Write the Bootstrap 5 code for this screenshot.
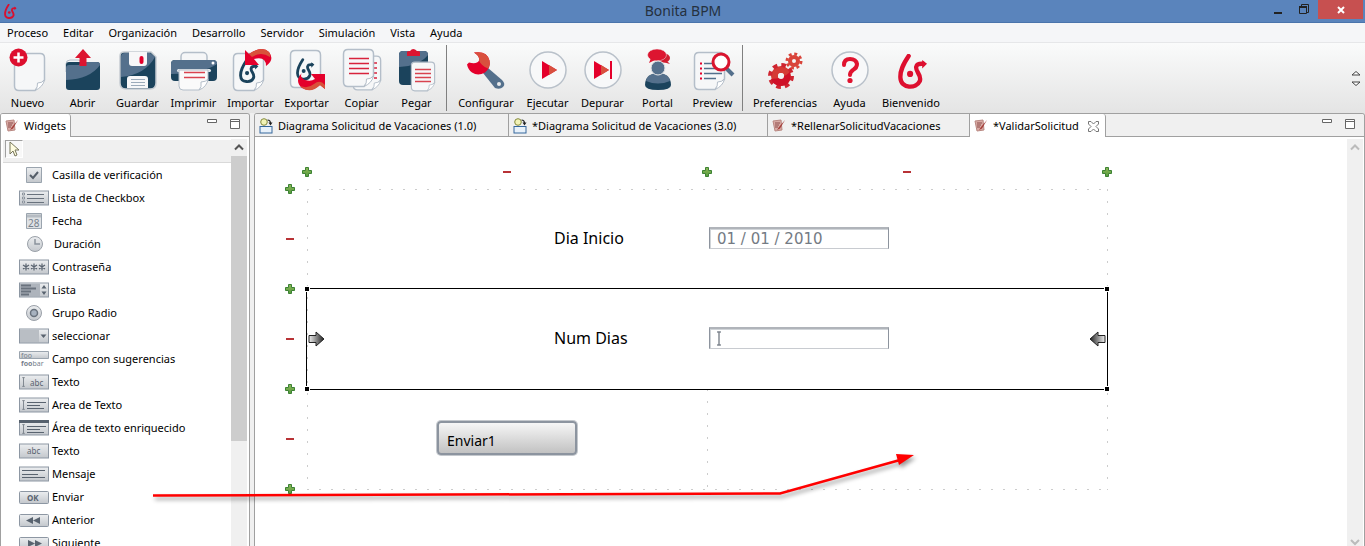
<!DOCTYPE html>
<html lang="es">
<head>
<meta charset="utf-8">
<meta name="viewport" content="width=device-width, initial-scale=1">
<title>Bonita BPM</title>
<link href="https://cdn.jsdelivr.net/npm/bootstrap@5.3.0/dist/css/bootstrap.min.css" rel="stylesheet">
<style>
  :root { --navy:#1b435c; --slate:#54708c; --red:#e4002b; --line:#a0a0a0; --pane:#f0f0f0; }
  body { font-family:"Noto Sans","Open Sans",sans-serif; font-size:11px; line-height:16px; color:#000; background:#f0f0f0; }
  button { font:inherit; color:inherit; background:none; border:0; padding:0; }
  svg { display:block; flex:none; }

  .titlebar { height:23px; background:#5a84bc; border-bottom:1px solid #4a74ac; }
  .titlebar h1 { font-size:14px; line-height:22px; color:#25313f; padding-left:84px; }
  .win-close { width:45px; height:19px; background:#c75050; margin-right:2px; }
  .win-btns { height:19px; }

  .menubar { height:20px; background:#f5f6f8; border-bottom:1px solid #e6e7e9; padding-left:7px; gap:15px; }
  .menubar a { color:#000; }

  .toolbar { height:70px; background:linear-gradient(#fafbfb,#e4e4e4); }
  .tool { width:55px; padding-top:5px; }
  .tool.w-57 { width:57px; }
  .tool.w-68 { width:68px; }
  .tool.w-74 { width:74px; }
  .tool span { display:block; line-height:22px; white-space:nowrap; }
  .tool-sep { width:1px; height:66px; background:#808080; margin:2px 5px 0 2px; }

  .pane { border:1px solid var(--line); border-bottom:0; border-radius:3px 3px 0 0; background:#fff; overflow:hidden; }
  .palette { width:250px; flex:none; }
  .tabstrip { height:23px; background:var(--pane); border-bottom:1px solid var(--line); }
  .tabitem { height:22px; border-right:1px solid var(--line); padding:2px 4px 0; gap:5px; white-space:nowrap; }
  .tabitem.on { height:23px; background:#fff; border-radius:0 3px 0 0; padding-top:1px; }
  .tab-wide { width:254px; }
  .tab-diagram { width:259px; }
  .tab-form { width:202px; }
  .tab-last { width:136px; }

  .palette-body { padding:3px 0 0 2px; }
  .palette-head { height:23px; background:var(--pane); border-bottom:1px solid #d9d9d9; padding-left:2px; }
  .pick { width:18px; height:18px; border:1px solid #a0a0a0; border-right-color:#fff; border-bottom-color:#fff; background:#f8f8f8; }
  .wlist { padding:0 0 0 16px; }
  .wlist li { height:23px; gap:3px; }
  .scroll { width:16px; background:#f0f0f0; margin:2px 1px 0 0; }
  .palette .scroll { margin-right:2px; }
  .thumb { height:285px; background:#cdcdcd; }

  .editor-body { padding:30px 0 0 30px; overflow:hidden; }
  .designer { display:grid; grid-template:10px 310px / 10px 810px; gap:7px; }
  .form-grid { position:relative; margin:5px 4px 4px 5px;
    background:
      repeating-linear-gradient(90deg,#ccc 0 2px,transparent 2px 12px) 0 0/100% 1px no-repeat,
      repeating-linear-gradient(90deg,#ccc 0 2px,transparent 2px 12px) 0 100%/100% 1px no-repeat,
      repeating-linear-gradient(#ccc 0 2px,transparent 2px 12px) 0 0/1px 100% no-repeat,
      repeating-linear-gradient(#ccc 0 2px,transparent 2px 12px) 100% 0/1px 100% no-repeat; }
  .frow { height:100px; display:grid; grid-template-columns:400px 1fr; align-items:center; padding-bottom:2px; }
  .frow label { width:153px; margin-left:auto; font-size:16px; line-height:22px; }
  .frow .split { align-self:stretch; background:repeating-linear-gradient(#ccc 0 2px,transparent 2px 12px) 0 0/1px 100% no-repeat; }
  .field { width:180px; height:22px; margin-left:2px; border:1px solid #8d949e; border-top:2px solid #b0b4ba; border-bottom-color:#c8cbd0; border-radius:0; box-shadow:inset 1px 1px 0 #d0d4d8; padding:0 7px; font:15px/18px "DejaVu Sans",sans-serif; color:#747b84; background:#fff; outline:0; }
  .selected { position:relative; }
  .selbox { position:absolute; inset:-1px 0 -1px -1px; border:1px solid #000; pointer-events:none; }
  .knob { position:absolute; width:6px; height:6px; background:#000; border:1px solid #fff; }
  .k-t { top:-3px; } .k-b { bottom:-3px; } .k-l { left:-3px; } .k-r { right:-2px; }
  .nudge { position:absolute; top:42px; }
  .n-l { left:1px; } .n-r { right:2px; }
  .caret-mark { position:absolute; left:9px; top:4px; }
  .submit { width:140px; height:34px; margin:0 auto; border:2px solid #8c949f; border-radius:4px; background:linear-gradient(#f6f6f6,#c2c2c2); box-shadow:0 0 0 1px #c4c8cd; padding:6px 8px 0; text-align:left; font-size:14px; line-height:22px; }
  .callout { position:absolute; left:150px; top:448px; pointer-events:none; filter:drop-shadow(2px 3px 2px #0006); z-index:5; }
</style>
</head>
<body class="vh-100 d-flex flex-column overflow-hidden position-relative">

<svg width="0" height="0" class="position-absolute" aria-hidden="true">
  <defs>
    <linearGradient id="gBtn" x2="0" y2="1"><stop stop-color="#eceef0"/><stop offset="1" stop-color="#c3c7cc"/></linearGradient>
    <linearGradient id="gPlus" x2="0" y2="1"><stop stop-color="#8fb85a"/><stop offset="1" stop-color="#579a3c"/></linearGradient>
    <linearGradient id="gArrow"><stop stop-color="#eee"/><stop offset="1" stop-color="#222"/></linearGradient>
    <symbol id="logo" viewBox="0 0 31 36"><path d="M11 2C5 11 2 17 2.500 24.500C3 36 19 36 22.500 28C25 21 17 18 19 12.500C20 9.500 23 10 26 10" fill="none" stroke="currentColor" stroke-width="4.500" stroke-linecap="round"/><path d="M25 6l5 4-5 5z" fill="currentColor"/><circle cx="12.500" cy="20.500" r="3.200" fill="currentColor"/></symbol>
    <symbol id="sheet" viewBox="0 0 33 40"><path d="M6 1.500H27Q31.500 1.500 31.500 6V28L22 38.500H6Q1.500 38.500 1.500 34V6Q1.500 1.500 6 1.500Z" fill="#f6f7f8" stroke="#b4bec9" stroke-width="1.500"/><path d="M22 38.500Q25 35 24.500 31Q29 31 31.500 28Q30 35 22 38.500Z" fill="#fff" stroke="#b4bec9"/></symbol>
    <symbol id="plus" viewBox="0 0 10 10"><path d="M3.500.5h3v3h3v3h-3v3h-3v-3h-3v-3h3z" fill="url(#gPlus)" stroke="#3c8234"/></symbol>
    <symbol id="minus" viewBox="0 0 10 10"><path d="M1 4h8v2H1z" fill="#b83236"/></symbol>
    <symbol id="formico" viewBox="0 0 14 14"><path d="M1 2l8-1 1 10-7 1z" fill="#d9aaa4" stroke="#b98882"/><path d="M3 4h5M3 6h4M3 8h3" stroke="#8d4d4a"/><path d="M13 1L7 8l-2 3 3-1.500z" fill="#a33c37"/></symbol>
    <symbol id="diagico" viewBox="0 0 14 16"><rect x="1" y="8.500" width="12" height="6.500" fill="#e8f1fa" stroke="#35679c"/><circle cx="5" cy="4" r="3.300" fill="#f2f3b6" stroke="#83893a"/><path d="M8.500 2q3 0 3 3.500" fill="none" stroke="#222" stroke-width="1.200"/><path d="M9.500 4.500h4l-2 3z" fill="#222"/></symbol>
    <symbol id="minmax" viewBox="0 0 34 12"><path d="M.5 1.500h9v3h-9z" fill="#fff" stroke="#666"/><path d="M23.500 1.500h9v9h-9zM23.500 3.500h9" fill="#fff" stroke="#666"/></symbol>
    <symbol id="box" viewBox="0 0 30 16"><rect x=".5" y="1" width="29" height="14" fill="url(#gBtn)" stroke="#8d97a3"/></symbol>
    <symbol id="beam" viewBox="0 0 6 16"><path d="M1 1h4M3 1v14M1 15h4" stroke="#7c838c" stroke-width="1.500"/></symbol>
  </defs>
</svg>

<header class="titlebar d-flex position-relative flex-shrink-0">
  <svg class="ms-1 mt-1" width="13" height="15" color="#d8102f"><use href="#logo"/></svg>
  <h1 class="m-0 flex-fill text-center fw-normal">Bonita BPM</h1>
  <div class="win-btns d-flex align-items-center pe-0">
    <button type="button" aria-label="Minimizar"><svg width="26" height="18"><path d="M9 12h8" stroke="#222" stroke-width="2"/></svg></button>
    <button type="button" aria-label="Restaurar"><svg width="27" height="18"><path d="M8.500 5.500h7v7h-7zM10.500 5V3.500h7v8H16" fill="none" stroke="#222"/><path d="M8 6h8" stroke="#222" stroke-width="2"/></svg></button>
    <button type="button" class="win-close" aria-label="Cerrar"><svg class="mx-auto" width="10" height="10"><path d="M2 2l6 6M8 2L2 8" stroke="#fff" stroke-width="2"/></svg></button>
  </div>
</header>

<nav class="menubar d-flex align-items-center flex-shrink-0">
  <a class="text-decoration-none" href="#">Proceso</a><a class="text-decoration-none" href="#">Editar</a><a class="text-decoration-none" href="#">Organización</a><a class="text-decoration-none" href="#">Desarrollo</a><a class="text-decoration-none" href="#">Servidor</a><a class="text-decoration-none" href="#">Simulación</a><a class="text-decoration-none" href="#">Vista</a><a class="text-decoration-none" href="#">Ayuda</a>
</nav>

<div class="toolbar d-flex flex-shrink-0 align-items-start" role="toolbar">
  <button type="button" class="tool"><svg class="mx-auto" width="50" height="44"><use href="#sheet" x="10" y="4" width="33" height="40"/><circle cx="15.500" cy="9.500" r="9" fill="#dd0f2f"/><path d="M15.500 4.500v10M10.500 9.500h10" stroke="#fff" stroke-width="2.500"/></svg><span>Nuevo</span></button>
  <button type="button" class="tool"><svg class="mx-auto" width="50" height="44"><path d="M8 16q0-4 4-4h9l3 4h10v8H8z" fill="#f4f5f6" stroke="#b4bec9"/><rect x="8" y="14" width="34" height="28" rx="3" fill="var(--navy)"/><path d="M8 32V20q0-3 3-3h10l3-3h15q3 0 3 3Q32 31 8 32z" fill="var(--slate)"/><path d="M25 1l8 9h-4.500v8h-7v-8H17z" fill="#dd1530"/></svg><span>Abrir</span></button>
  <button type="button" class="tool"><svg class="mx-auto" width="50" height="44"><path d="M11 4h27l5 5v26q0 6-6 6H13q-6 0-6-6V8q0-4 4-4z" fill="var(--navy)" stroke="#c6ccd2" stroke-width="1.500"/><path d="M8 9q0-4 4-4h25l5 4Q32 27 8 29z" fill="var(--slate)"/><path d="M16 4h18v11q0 3-3 3H19q-3 0-3-3z" fill="#f7f7f8"/><rect x="26.500" y="8" width="4" height="8" rx="2" fill="var(--red)"/><path d="M14 40V31q0-3 3-3h15q3 0 3 3v9z" fill="#f7f7f8"/><path d="M18 31.500h14M18 34.500h14M18 37.500h14" stroke="#9cabba"/></svg><span>Guardar</span></button>
  <button type="button" class="tool w-57"><svg class="mx-auto" width="50" height="44"><rect x="12" y="4.500" width="26" height="18" rx="4" fill="#f5f6f7" stroke="#b4bec9" stroke-width="1.500"/><rect x="2" y="12" width="46" height="21" rx="4" fill="var(--navy)"/><path d="M2 26V16q0-4 4-4h38q4 0 4 4Q34 26 2 26z" fill="var(--slate)"/><circle cx="44" cy="15" r="1.500" fill="#fff"/><rect x="8" y="21" width="34" height="3" rx="1.500" fill="#e4e8ec"/><path d="M10 22h29v11l-9 9H14q-4 0-4-4z" fill="#fafafa" stroke="#b4bec9"/><path d="M30 42q3-3 2-8 5 0 7-3-1 8-9 11z" fill="#fff" stroke="#b4bec9"/><path d="M15 24.500h21M15 29.500h21" stroke="#d9434f" stroke-width="1.500"/></svg><span>Imprimir</span></button>
  <button type="button" class="tool w-57"><svg class="mx-auto" width="50" height="44"><use href="#sheet" x="6" y="4" width="33" height="40"/><g color="#1b435c"><use href="#logo" x="13" y="11" width="20" height="25"/></g><path d="M19 2l4 4Q36-3 43 4q6 8-3 14 0-10-12-7l5 6H19z" fill="var(--red)"/><path d="M23 6Q36-3 43 4q2 3 1 5-9-6-18 0z" fill="#d8523a"/></svg><span>Importar</span></button>
  <button type="button" class="tool"><svg class="mx-auto" width="50" height="44"><use href="#sheet" x="7" y="1" width="33" height="40"/><g color="#1b435c"><use href="#logo" x="14" y="9" width="19" height="25"/></g><path d="M20 25q-3 4 3 7 6 2 10-1l-4-5h14v15l-5-4q-9 8-18 3Q12 33 20 25z" fill="var(--red)"/><path d="M18 38q8 3 14-2t11 1v4l-5-4q-10 10-20 1z" fill="#d8523a"/></svg><span>Exportar</span></button>
  <button type="button" class="tool"><svg class="mx-auto" width="50" height="44"><use href="#sheet" x="15" y="6" width="30" height="38"/><path d="M37 15h3M37 20h3M37 25h3M37 30h3" stroke="#d8233c" stroke-width="1.500"/><use href="#sheet" x="5" y="0" width="33" height="40"/><path d="M12 10.500h20M12 15.500h20M12 20.500h20M12 25.500h20" stroke="#d8233c" stroke-width="1.500"/></svg><span>Copiar</span></button>
  <button type="button" class="tool"><svg class="mx-auto" width="50" height="44"><rect x="7" y="3" width="29" height="34" rx="4" fill="var(--navy)"/><path d="M7 18V7q0-4 4-4h21q4 0 4 4-9 11-29 12z" fill="var(--slate)"/><path d="M15 8V4q0-1 3-1 3-4 7 0 3 0 3 1v4z" fill="#dd1530"/><use href="#sheet" x="18" y="13" width="26" height="31"/><path d="M23 21.500h16M23 25.500h16M23 29.500h16M23 33.500h16" stroke="#d8434f" stroke-width="1.500"/></svg><span>Pegar</span></button>
  <div class="tool-sep"></div>
  <button type="button" class="tool w-68"><svg class="mx-auto" width="50" height="44"><path d="M22 25l5-5 14 12q4 4 1 7t-8 1z" fill="var(--slate)"/><circle cx="38" cy="36" r="2" fill="#e8eaec"/><path d="M13 4.500q13-2 15.500 8 1.500 7-4.500 12-7 4-13 0-4-3-5-8l2-2q8 2 10-2 1-4-5-8z" fill="var(--red)"/><path d="M13 4.500q13-2 15.500 8 1 5-1.500 8-7-3-9-8 1-4-5-8z" fill="#d9503e"/></svg><span>Configurar</span></button>
  <button type="button" class="tool"><svg class="mx-auto" width="50" height="44"><circle cx="25" cy="22" r="18" fill="#f7f8f9" stroke="#b9c1ca" stroke-width="1.500"/><path d="M19 13v18l15-9z" fill="var(--red)"/><path d="M26 17v10l8-5z" fill="#d8503e"/></svg><span>Ejecutar</span></button>
  <button type="button" class="tool"><svg class="mx-auto" width="50" height="44"><circle cx="25" cy="22" r="18" fill="#f7f8f9" stroke="#b9c1ca" stroke-width="1.500"/><path d="M16 13v18l15-9z" fill="var(--red)"/><path d="M23 17v10l8-5z" fill="#d8503e"/><path d="M33 13v18" stroke="var(--red)" stroke-width="2"/></svg><span>Depurar</span></button>
  <button type="button" class="tool"><svg class="mx-auto" width="50" height="44"><ellipse cx="31" cy="10" rx="6" ry="4.500" fill="#cf1d30"/><path d="M33 12l4 4-7-2z" fill="#cf1d30"/><ellipse cx="24" cy="7" rx="9.500" ry="6" fill="#dd1530" stroke="#eee" stroke-width=".5"/><path d="M18 10l-2 5 6-3z" fill="#dd1530"/><path d="M12 37q0-11 13-12 13 1 13 12 0 5-13 5t-13-5z" fill="var(--navy)"/><path d="M13 33q2-8 12-8t12 8q-12 5-24 0z" fill="var(--slate)"/><circle cx="25" cy="20" r="7" fill="var(--slate)" stroke="#e8e8e8"/></svg><span>Portal</span></button>
  <button type="button" class="tool"><svg class="mx-auto" width="50" height="44"><use href="#sheet" x="5" y="3" width="33" height="40"/><path d="M16 15.500h12M16 20.500h18M16 25.500h18M16 30.500h12" stroke="var(--slate)" stroke-width="1.500"/><path d="M12 15.500h2M12 20.500h2M12 25.500h2M12 30.500h2" stroke="var(--red)" stroke-width="2"/><path d="M38 20l7 7" stroke="var(--slate)" stroke-width="4"/><circle cx="33" cy="14" r="8" fill="#fff" stroke="#d9152f" stroke-width="3"/></svg><span>Preview</span></button>
  <div class="tool-sep"></div>
  <button type="button" class="tool w-74"><svg class="mx-auto" width="50" height="44" fill="none"><circle cx="21" cy="28" r="6.500" stroke="#d53a35" stroke-width="7"/><circle cx="21" cy="28" r="11" stroke="#cf2430" stroke-width="4" stroke-dasharray="4.640 4"/><circle cx="34" cy="13" r="4" stroke="#d9443a" stroke-width="4"/><circle cx="34" cy="13" r="7" stroke="#d9443a" stroke-width="3" stroke-dasharray="2.900 2.600"/><path d="M11 31q12 0 19-7 2 14-10 14-7-1-9-7z" fill="#cf1028"/><circle cx="21" cy="28" r="3" fill="#f3f3f3"/></svg><span>Preferencias</span></button>
  <button type="button" class="tool"><svg class="mx-auto" width="50" height="44"><circle cx="25" cy="22" r="18" fill="#f7f8f9" stroke="#b9c1ca" stroke-width="1.500"/><path d="M19 17q0-6 6-6t7 5q0 4-4 6-3 2-3 5" fill="none" stroke="#e0132f" stroke-width="4" stroke-linecap="round"/><circle cx="25" cy="32.500" r="2.600" fill="#e0132f"/></svg><span>Ayuda</span></button>
  <button type="button" class="tool w-68"><svg class="mx-auto" width="50" height="44" color="#dd0f2f"><use href="#logo" x="12" y="6" width="30" height="35"/></svg><span>Bienvenido</span></button>
  <button type="button" class="ms-auto mt-4 me-1" aria-label="Más herramientas"><svg width="10" height="16" class="mt-1"><path d="M1 4h8L5 .5zM1 11h8L5 14.500z" fill="#fff" stroke="#444"/></svg></button>
</div>

<main class="d-flex flex-fill" style="min-height:0">
  <aside class="pane palette d-flex flex-column">
    <div class="tabstrip d-flex align-items-start justify-content-between flex-shrink-0">
      <div class="tabitem on d-flex align-items-center"><svg width="14" height="14"><use href="#formico"/></svg>Widgets</div>
      <svg class="mt-1 me-2" width="34" height="12"><use href="#minmax"/></svg>
    </div>
    <div class="d-flex flex-fill overflow-hidden">
      <div class="palette-body flex-fill overflow-hidden">
        <div class="palette-head"><button type="button" class="pick" aria-label="Seleccionar"><svg width="16" height="16"><path d="M4 1v12l3-3 2 5 2-1-2-5h4z" fill="#fffde0" stroke="#77765a"/></svg></button></div>
        <ul class="wlist list-unstyled m-0">
          <li class="d-flex align-items-center"><svg width="30" height="16"><path d="M7.500.5h15v15h-15z" fill="url(#gBtn)" stroke="#9aa4ae"/><path d="M11 8l3 3 5-6" fill="none" stroke="#555e69" stroke-width="2"/></svg>Casilla de verificación</li>
          <li class="d-flex align-items-center"><svg width="30" height="16"><use href="#box"/><path d="M8 4.500h17M8 8.500h17M8 12.500h17" stroke="#69727d"/><path d="M3.500 3h2v2h-2zM3.500 7h2v2h-2zM3.500 11h2v2h-2z" fill="#eee" stroke="#8b939d"/></svg>Lista de Checkbox</li>
          <li class="d-flex align-items-center"><svg width="30" height="16"><path d="M7.500.5h15v15h-15z" fill="#dfe2e5" stroke="#9aa4ae"/><path d="M8 3h14" stroke="#b5bbc2" stroke-width="3"/><text x="9" y="14" font-size="10" fill="#77818c">28</text></svg>Fecha</li>
          <li class="d-flex align-items-center"><svg width="32" height="16"><circle cx="16" cy="8" r="7.500" fill="url(#gBtn)" stroke="#9aa0a8"/><path d="M16 3v5h5" fill="none" stroke="#8b939d" stroke-width="1.500"/></svg>Duración</li>
          <li class="d-flex align-items-center"><svg width="30" height="16"><use href="#box"/><path d="M7 4.500v7M4 6l6 4M10 6l-6 4M15 4.500v7M12 6l6 4M18 6l-6 4M23 4.500v7M20 6l6 4M26 6l-6 4" stroke="#59636f" stroke-width="1.200"/></svg>Contraseña</li>
          <li class="d-flex align-items-center"><svg width="30" height="16"><use href="#box"/><path d="M1 2h20v12H1z" fill="#aeb4bc"/><path d="M2 3.500h10M2 6.500h15M2 9.500h10M2 12.500h8" stroke="#6a737e" stroke-width="2"/><path d="M22.500 6.500h5L25 3zM22.500 9.500h5L25 13z" fill="#59636f"/></svg>Lista</li>
          <li class="d-flex align-items-center"><svg width="30" height="16"><circle cx="15" cy="8" r="7.500" fill="url(#gBtn)" stroke="#9aa0a8"/><circle cx="15" cy="8" r="3.500" fill="#a7b2bf" stroke="#69727d" stroke-width="1.500"/></svg>Grupo Radio</li>
          <li class="d-flex align-items-center"><svg width="30" height="16"><use href="#box"/><path d="M1 2h19v12H1z" fill="#b9bec4"/><path d="M21.500 6.500h6L24.500 10z" fill="#59636f"/></svg>seleccionar</li>
          <li class="d-flex align-items-center"><svg width="30" height="16"><path d="M.5.5h29v7H.5z" fill="url(#gBtn)" stroke="#9aa4ae"/><text x="2" y="7" font-size="7" fill="#77818c">foo</text><text x="2" y="15" font-size="7" fill="#77818c"><tspan font-weight="700">foo</tspan>bar</text></svg>Campo con sugerencias</li>
          <li class="d-flex align-items-center"><svg width="30" height="16"><use href="#box"/><use href="#beam" x="2" y="3" width="5" height="10"/><text x="11" y="12" font-size="8" fill="#59636f">abc</text></svg>Texto</li>
          <li class="d-flex align-items-center"><svg width="30" height="16"><use href="#box"/><use href="#beam" x="2" y="3" width="5" height="10"/><path d="M8 5.500h19M8 8.500h13M8 11.500h17" stroke="#59636f"/></svg>Area de Texto</li>
          <li class="d-flex align-items-center"><svg width="30" height="16"><use href="#box"/><path d="M0 1.500h30" stroke="#56616e" stroke-width="3"/><use href="#beam" x="2" y="4" width="5" height="10"/><path d="M8 6.500h19M8 9.500h13M8 12.500h17" stroke="#59636f"/></svg>Área de texto enriquecido</li>
          <li class="d-flex align-items-center"><svg width="30" height="16"><use href="#box"/><text x="8" y="11" font-size="8" fill="#59636f">abc</text></svg>Texto</li>
          <li class="d-flex align-items-center"><svg width="30" height="16"><use href="#box"/><path d="M3 4.500h23M3 8.500h16M3 11.500h23" stroke="#59636f"/></svg>Mensaje</li>
          <li class="d-flex align-items-center"><svg width="30" height="16"><rect x=".5" y="2.500" width="29" height="12" rx="1" fill="url(#gBtn)" stroke="#8d97a3"/><text x="8" y="12" font-size="8" font-weight="700" fill="#59636f">OK</text></svg>Enviar</li>
          <li class="d-flex align-items-center"><svg width="30" height="16"><rect x=".5" y="2.500" width="29" height="12" rx="1" fill="url(#gBtn)" stroke="#8d97a3"/><path d="M14 5v7L7 8.500zM21 5v7l-7-3.500z" fill="#59636f"/></svg>Anterior</li>
          <li class="d-flex align-items-center"><svg width="30" height="16"><rect x=".5" y="2.500" width="29" height="12" rx="1" fill="url(#gBtn)" stroke="#8d97a3"/><path d="M9 5v7l7-3.500zM16 5v7l7-3.500z" fill="#59636f"/></svg>Siguiente</li>
        </ul>
      </div>
      <div class="scroll flex-shrink-0"><svg width="16" height="17"><path d="M4 10.500l4-4 4 4" fill="none" stroke="#555" stroke-width="2"/></svg><div class="thumb"></div></div>
    </div>
  </aside>

  <section class="pane d-flex flex-column flex-fill ms-1" style="min-width:0">
    <div class="tabstrip d-flex align-items-start flex-shrink-0">
      <div class="tabitem tab-wide d-flex align-items-center"><svg width="14" height="16"><use href="#diagico"/></svg>Diagrama Solicitud de Vacaciones (1.0)</div>
      <div class="tabitem tab-diagram d-flex align-items-center"><svg width="14" height="16"><use href="#diagico"/></svg>*Diagrama Solicitud de Vacaciones (3.0)</div>
      <div class="tabitem tab-form d-flex align-items-center"><svg width="14" height="14"><use href="#formico"/></svg>*RellenarSolicitudVacaciones</div>
      <div class="tabitem tab-last on d-flex align-items-center"><svg width="14" height="14"><use href="#formico"/></svg>*ValidarSolicitud<button type="button" class="ms-1" aria-label="Cerrar pestaña"><svg width="11" height="11"><path d="M.5.5h2.500l2.500 2.500L8 .5h2.500V3L8 5.500l2.500 2.500v2.500H8L5.500 8 3 10.500H.5V8L3 5.500.5 3z" fill="#fff" stroke="#777"/></svg></button></div>
      <svg class="mt-1 me-2 ms-auto" width="34" height="12"><use href="#minmax"/></svg>
    </div>
    <div class="d-flex flex-fill overflow-hidden">
      <div class="editor-body flex-fill">
        <div class="designer">
          <span></span>
          <div class="d-flex justify-content-between">
            <svg width="10" height="10"><use href="#plus"/></svg><svg width="10" height="10"><use href="#minus"/></svg><svg width="10" height="10"><use href="#plus"/></svg><svg width="10" height="10"><use href="#minus"/></svg><svg width="10" height="10"><use href="#plus"/></svg>
          </div>
          <div class="d-flex flex-column justify-content-between">
            <svg width="10" height="10"><use href="#plus"/></svg><svg width="10" height="10"><use href="#minus"/></svg><svg width="10" height="10"><use href="#plus"/></svg><svg width="10" height="10"><use href="#minus"/></svg><svg width="10" height="10"><use href="#plus"/></svg><svg width="10" height="10"><use href="#minus"/></svg><svg width="10" height="10"><use href="#plus"/></svg>
          </div>
          <form class="form-grid">
            <div class="frow"><label for="dia">Dia Inicio</label><input id="dia" class="field" type="text" value="01 / 01 / 2010"></div>
            <div class="frow selected">
              <label for="num">Num Dias</label>
              <div class="position-relative d-flex"><input id="num" class="field" type="text"><svg class="caret-mark" width="6" height="15" viewBox="0 0 6 16"><use href="#beam"/></svg></div>
              <div class="selbox"></div>
              <i class="knob k-t k-l"></i><i class="knob k-t k-r"></i><i class="knob k-b k-l"></i><i class="knob k-b k-r"></i>
              <svg class="nudge n-l" width="17" height="16"><path d="M1 4.500h7V1l8 7-8 7v-3.500H1z" fill="url(#gArrow)" stroke="#222"/></svg>
              <svg class="nudge n-r" width="17" height="16"><path d="M1 4.500h7V1l8 7-8 7v-3.500H1z" transform="matrix(-1 0 0 1 17 0)" fill="url(#gArrow)" stroke="#222"/></svg>
            </div>
            <div class="frow"><button type="button" class="submit d-block">Enviar1</button><div class="split"></div></div>
          </form>
        </div>
      </div>
      <div class="scroll flex-shrink-0 d-flex flex-column justify-content-between"><svg width="16" height="17"><path d="M4 10.500l4-4 4 4" fill="none" stroke="#bbb" stroke-width="2"/></svg><svg width="16" height="10"><path d="M4 4l4 4 4-4" fill="none" stroke="#bbb" stroke-width="2"/></svg></div>
    </div>
  </section>
</main>

<svg class="callout" width="780" height="60" aria-hidden="true"><path d="M3 47.500L630 45.500L750 12" fill="none" stroke="#f00" stroke-width="2.500"/><path d="M746 6L764 7L749 17z" fill="#f00"/></svg>

<script src="https://cdn.jsdelivr.net/npm/bootstrap@5.3.0/dist/js/bootstrap.bundle.min.js"></script>
</body>
</html>
